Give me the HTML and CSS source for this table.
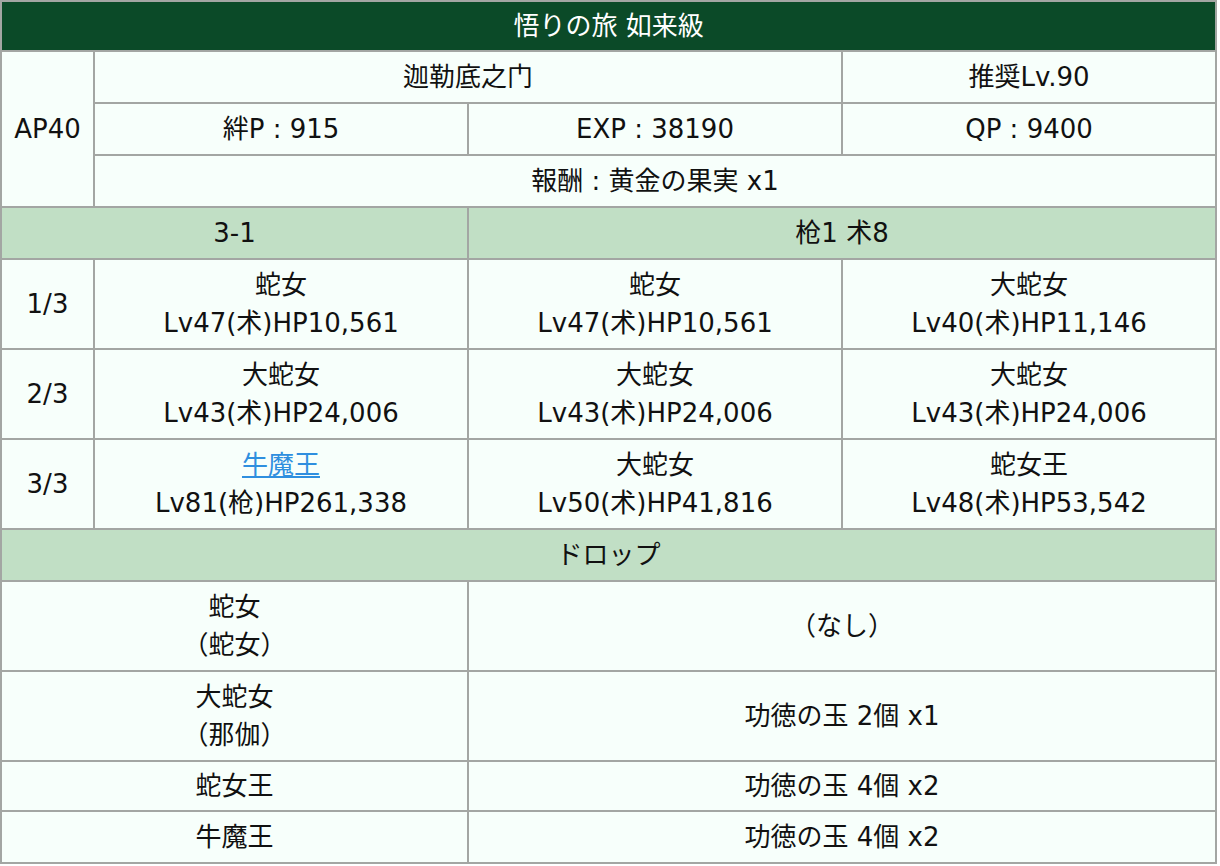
FILE: index.html
```html
<!DOCTYPE html>
<html lang="ja">
<head>
<meta charset="utf-8">
<title>悟りの旅 如来級</title>
<link rel="stylesheet" href="styles.css">
</head>
<body>
<table class="quest">
  <colgroup>
    <col class="c0"><col class="c1"><col class="c2"><col class="c3">
  </colgroup>
  <tr><th class="title" colspan="4">悟りの旅 如来級</th></tr>
  <tr><td rowspan="3">AP40</td><td colspan="2">迦勒底之门</td><td>推奨Lv.90</td></tr>
  <tr><td>絆P : 915</td><td>EXP : 38190</td><td>QP : 9400</td></tr>
  <tr><td colspan="3">報酬 : 黄金の果実 x1</td></tr>
  <tr class="sub"><td colspan="2">3-1</td><td colspan="2">枪1 术8</td></tr>
  <tr><td>1/3</td><td>蛇女<br>Lv47(术)HP10,561</td><td>蛇女<br>Lv47(术)HP10,561</td><td>大蛇女<br>Lv40(术)HP11,146</td></tr>
  <tr><td>2/3</td><td>大蛇女<br>Lv43(术)HP24,006</td><td>大蛇女<br>Lv43(术)HP24,006</td><td>大蛇女<br>Lv43(术)HP24,006</td></tr>
  <tr><td>3/3</td><td><a class="link" href="#">牛魔王</a><br>Lv81(枪)HP261,338</td><td>大蛇女<br>Lv50(术)HP41,816</td><td>蛇女王<br>Lv48(术)HP53,542</td></tr>
  <tr class="sub"><td colspan="4">ドロップ</td></tr>
  <tr><td colspan="2">蛇女<br>（蛇女）</td><td colspan="2">（なし）</td></tr>
  <tr><td colspan="2">大蛇女<br>（那伽）</td><td colspan="2">功徳の玉 2個 x1</td></tr>
  <tr class="short"><td colspan="2">蛇女王</td><td colspan="2">功徳の玉 4個 x2</td></tr>
  <tr><td colspan="2">牛魔王</td><td colspan="2">功徳の玉 4個 x2</td></tr>
</table>
</body>
</html>
```
FILE: styles.css
```css
html, body {
  margin: 0;
  padding: 0;
  background: #ffffff;
}
.quest {
  border-collapse: collapse;
  table-layout: fixed;
  width: 1217px;
  font-family: "DejaVu Sans", "Noto Sans CJK JP", sans-serif;
  font-size: 26px;
  color: #111;
}
.c0 { width: 93px; }
.c1, .c2, .c3 { width: 374px; }
.quest th, .quest td {
  border: 2px solid #a3a6a3;
  background: #f7fffb;
  text-align: center;
  vertical-align: middle;
  line-height: 38px;
  padding: 6px 4px;
  font-weight: normal;
}
.quest th.title {
  background: #0b4a28;
  color: #ffffff;
  height: 36px;
  padding-top: 5px;
  padding-bottom: 5px;
}
.quest .sub td {
  background: #c1dfc5;
}
.quest .short td {
  padding-top: 5px;
  padding-bottom: 5px;
}
.link {
  color: #2f8fdf;
  text-decoration: underline;
}
```
